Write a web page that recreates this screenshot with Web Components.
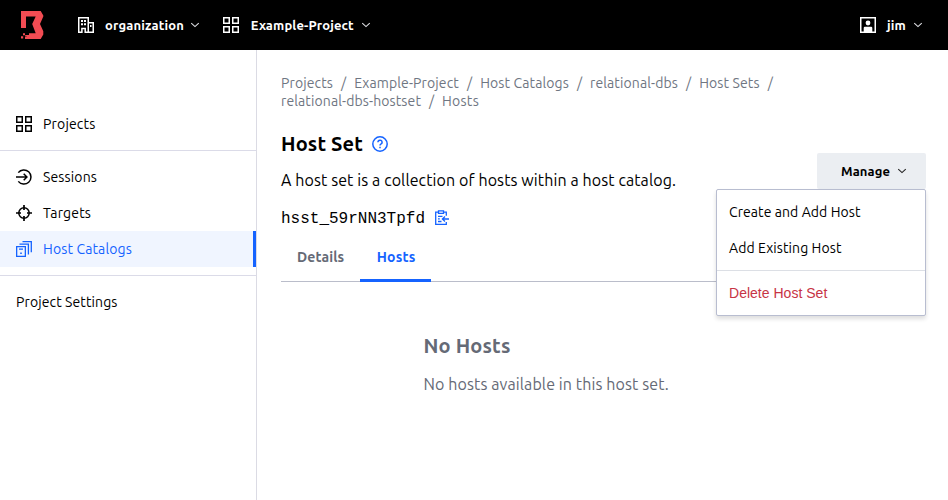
<!DOCTYPE html>
<html lang="en"><head><meta charset="utf-8"><title>Host Set</title>
<style>html,body{margin:0;height:100%;background:#fff;overflow:hidden}body{font-family:Ubuntu,"Noto Sans","Open Sans",sans-serif;font-size:14px;color:#000}</style></head>
<body><host-page></host-page>
<script>
const define=(name,html,setup)=>customElements.define(name,class extends HTMLElement{
  constructor(){super();this.attachShadow({mode:'open'}).innerHTML=html;}
  connectedCallback(){if(setup)setup(this,this.shadowRoot);}
});

// Label whose tracking is adjusted so that it spans its "w" attribute.
define('fit-label','<style>:host{display:block;flex:none;white-space:nowrap}span{display:inline-block}</style><span></span>',(el,r)=>{
  const s=r.querySelector('span');s.textContent=el.getAttribute('text');
  const w=+el.getAttribute('w');el.style.width=w+'px';
  const n=s.getBoundingClientRect().width;
  s.style.letterSpacing=((w-n)/s.textContent.length)+'px';
});

const icons={
logo:['0 0 24 30','<path fill="#f24c53" d="M1 1h19.7l2.6 4.4v1.2L20 14l3.3 7.3v3.2L20.7 29H7v-2.2H5.2V25H9v-1.8h6.7L12.2 14l3.5-7.5H6V18H1zM1 26.2h2.2v2.3H1zM3 23.3h2v1.9H3zM5 27h2v2H5z"/>'],
org:['0 0 16 16','<path d="M.75 15.25V.75h9.5v14.5H7.2v-3.7H3.9v3.7zM10.2 5.8h5.05v9.45H10.2"/><path fill="currentColor" stroke="none" d="M3 3h2v2H3zm3 0h2v2H6zM3 6.3h2v2H3zm3 0h2v2H6zM12 8h1.5v2H12z"/>'],
grid:['0 0 16 16','<path d="M.75.75h5.5v5.5H.75zm9 0h5.5v5.5h-5.5zm-9 9h5.5v5.5H.75zm9 0h5.5v5.5h-5.5z"/>'],
user:['0 0 16 16','<path d="M.75.75h14.5v14.5H.75z"/><circle cx="8" cy="6" r="2.4" fill="currentColor" stroke="none"/><path fill="currentColor" stroke="none" d="M3.7 15v-4q0-1.2 1.2-1.2h6.2q1.2 0 1.2 1.2v4z"/>'],
chev:['0 0 16 16','<path stroke-width="1.5" d="M3 5.5l5 4.6 5-4.6"/>'],
enter:['0 0 16 16','<path d="M2.3 3.6a7.1 7.1 0 1 1 0 8.8M0 8h10.5M7.7 4.8L10.9 8l-3.2 3.2"/>'],
target:['0 0 16 16','<circle cx="8" cy="8" r="5.2"/><path stroke-width="1.7" d="M8 0v5M8 11v5M0 8h5M11 8h5"/>'],
hosts:['0 0 16 16','<path stroke-width="1.3" d="M.65 5.65h8.7v9.7H.65zM3.5 3.1h8.9v10.3M6.5.65h8.8v10.7M3 8.2h4"/><path stroke-width="1.5" d="M4.2 12.3h1.6"/>'],
help:['0 0 16 16','<circle cx="8" cy="8" r="7.2"/><path d="M5.9 6.2a2.1 2 0 1 1 3.2 1.7q-1.1.6-1.1 1.5M8 10.8v1.5"/>'],
copy:['0 0 16 16','<path stroke-width="1.3" d="M4.5 2.2H1.7v12.1h10.6v-2.4M9.5 2.2h2.8v3.6M4.5.8h5v2.6h-5zM4 6.3h4.5M4 8.9h1.8M4 11.5h3.5M15 9H8.6M11 6.5L8.4 9l2.6 2.5"/>']};
define('ui-icon','<style>:host{display:block;flex:none}svg{display:block;width:100%;height:100%}</style><svg fill="none" stroke="currentColor" stroke-width="1.5"></svg>',(el,r)=>{
  const [box,d]=icons[el.getAttribute('name')],s=r.querySelector('svg');
  s.setAttribute('viewBox',box);if(box!=='0 0 16 16')s.setAttribute('stroke','none');s.innerHTML=d;
  el.style.width=(el.getAttribute('size')||16)+'px';el.style.height=(el.getAttribute('h')||el.getAttribute('size')||16)+'px';
});

define('app-header',`<style>:host{display:flex;height:50px;background:#000;color:#fff;align-items:center;box-sizing:border-box;padding:0 24px 0 20px;font-weight:700;font-size:13px}
.g{display:flex;align-items:center}.o{margin-left:33.5px}.p{margin-left:21.5px}.u{margin-left:auto}fit-label{margin:0 5px 0 11.5px}.p fit-label{margin:0 6px 0 12.3px}.u fit-label{margin:0 6px 0 11px}ui-icon[name=chev]{color:#dedfe3}</style>
<ui-icon name="logo" size="24" h="30"></ui-icon>
<div class="g o"><ui-icon name="org"></ui-icon><fit-label text="organization" w="79"></fit-label><ui-icon name="chev" size="12"></ui-icon></div>
<div class="g p"><ui-icon name="grid"></ui-icon><fit-label text="Example-Project" w="103"></fit-label><ui-icon name="chev" size="12"></ui-icon></div>
<div class="g u"><ui-icon name="user"></ui-icon><fit-label text="jim" w="19"></fit-label><ui-icon name="chev" size="12"></ui-icon></div>`);

define('nav-item','<style>:host{display:flex;height:36px;align-items:center;padding-left:16px;gap:11px;box-sizing:border-box}:host([active]){color:#1563ff;background:#f0f5ff;border-right:3px solid #1563ff}</style><slot></slot>');
define('app-nav',`<style>:host{display:block;box-sizing:border-box;width:257px;padding-top:56px;border-right:1px solid #dbdbe4}hr{border:0;border-top:1px solid #dbdbe8;margin:8px 0}</style>
<nav><nav-item><ui-icon name="grid"></ui-icon><fit-label text="Projects" w="52.5"></fit-label></nav-item><hr>
<nav-item><ui-icon name="enter"></ui-icon><fit-label text="Sessions" w="54"></fit-label></nav-item>
<nav-item><ui-icon name="target"></ui-icon><fit-label text="Targets" w="48"></fit-label></nav-item>
<nav-item active><ui-icon name="hosts"></ui-icon><fit-label text="Host Catalogs" w="89"></fit-label></nav-item><hr>
<nav-item><fit-label text="Project Settings" w="101.5"></fit-label></nav-item></nav>`);

define('bread-crumbs',`<style>:host{display:block;color:#6f7682;line-height:18px}div{display:flex;gap:8px}</style>
<div><fit-label text="Projects" w="52"></fit-label><fit-label text="/" w="5.2"></fit-label><fit-label text="Example-Project" w="104.8"></fit-label><fit-label text="/" w="5.2"></fit-label><fit-label text="Host Catalogs" w="88.8"></fit-label><fit-label text="/" w="5"></fit-label><fit-label text="relational-dbs" w="88"></fit-label><fit-label text="/" w="5.2"></fit-label><fit-label text="Host Sets" w="60.5"></fit-label><fit-label text="/" w="5"></fit-label></div>
<div><fit-label text="relational-dbs-hostset" w="140"></fit-label><fit-label text="/" w="5"></fit-label><fit-label text="Hosts" w="37"></fit-label></div>`);

define('action-menu',`<style>:host{display:block;position:relative;width:109px;height:36px}
button{all:unset;box-sizing:border-box;width:109px;height:36px;background:#ebeef2;border-radius:2px;display:flex;align-items:center;padding-left:24px;gap:6px;font-size:13px;font-weight:700;color:#000}
button ui-icon{color:#222}
.m{position:absolute;z-index:1;right:0;top:36px;width:210px;height:127px;box-sizing:border-box;border:1px solid #b8bdd0;border-radius:2px;background:#fff;box-shadow:0 3px 4px #0002;padding:4px 0}
.i{height:36px;display:flex;align-items:center;padding-left:12px}hr{border:0;border-top:1px solid #dcdfe5;margin:4px 0}.d{color:#c73445;font-family:"Liberation Sans",Arial,sans-serif}</style>
<button><fit-label text="Manage" w="49"></fit-label><ui-icon name="chev" size="12"></ui-icon></button>
<div class="m"><div class="i"><fit-label text="Create and Add Host" w="131.5"></fit-label></div><div class="i"><fit-label text="Add Existing Host" w="112.5"></fit-label></div><hr><div class="i d"><fit-label text="Delete Host Set" w="98.3"></fit-label></div></div>`);

define('tab-bar',`<style>:host{display:flex;height:49px;box-sizing:border-box;border-bottom:1px solid #babdca;font-weight:700;color:#656a76}
div{box-sizing:border-box;height:49px;padding:14px 16px 0;line-height:20px}.a{color:#1563ff;border-bottom:3px solid #1563ff;padding:14px 15.5px 0 16.5px}</style><div><fit-label text="Details" w="47.3"></fit-label></div><div class="a"><fit-label text="Hosts" w="38.7"></fit-label></div>`);

define('host-main',`<style>:host{display:block;flex:1;padding:24px 22px 0 24px}
.top{display:flex;justify-content:space-between;padding-top:20px}.h{display:flex;align-items:center;gap:9px;color:#1563ff;height:26px}.h fit-label{font-size:20px;font-weight:700;color:#000}.h ui-icon{margin-top:2px}
.desc{font-size:16px;line-height:24px;margin-top:12px}.id{display:flex;align-items:center;gap:9.3px;height:24px;margin-top:15px;color:#1563ff;font:16px "Liberation Mono","Courier New",monospace}.id fit-label{color:#000}.id ui-icon{margin-top:-2px}
action-menu{margin-top:23px}tab-bar{margin-top:2px}.e{width:360px;margin:51px auto 0;color:#656a76}.t{font-size:20px;font-weight:700;line-height:26px}.b{font-size:16px;line-height:24px;margin-top:13px}</style>
<bread-crumbs></bread-crumbs>
<div class="top"><div><div class="h"><fit-label text="Host Set" w="82"></fit-label><ui-icon name="help"></ui-icon></div><div class="desc"><fit-label text="A host set is a collection of hosts within a host catalog." w="395"></fit-label></div><div class="id"><fit-label text="hsst_59rNN3Tpfd" w="144"></fit-label><ui-icon name="copy"></ui-icon></div></div><action-menu></action-menu></div>
<tab-bar></tab-bar>
<div class="e"><fit-label class="t" text="No Hosts" w="87"></fit-label><fit-label class="b" text="No hosts available in this host set." w="245.3"></fit-label></div>`);
define('host-page','<style>:host{display:flex;flex-direction:column;height:500px}.body{display:flex;flex:1}</style><app-header></app-header><div class="body"><app-nav></app-nav><host-main></host-main></div>');
</script></body></html>
